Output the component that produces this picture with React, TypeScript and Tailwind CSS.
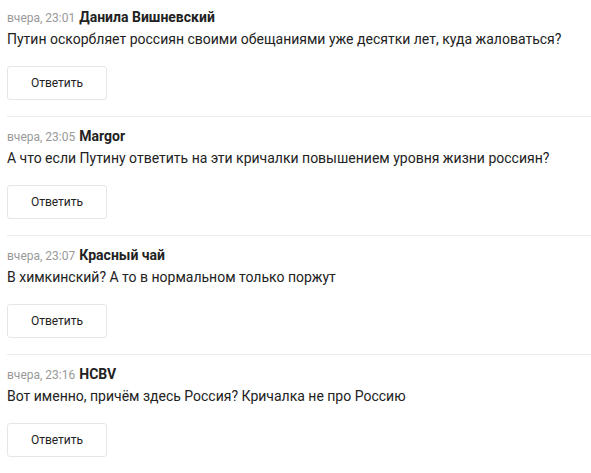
import React from "react";

const comments = [
  { time: "вчера, 23:01", author: "Данила Вишневский", text: "Путин оскорбляет россиян своими обещаниями уже десятки лет, куда жаловаться?" },
  { time: "вчера, 23:05", author: "Margor", text: "А что если Путину ответить на эти кричалки повышением уровня жизни россиян?" },
  { time: "вчера, 23:07", author: "Красный чай", text: "В химкинский? А то в нормальном только поржут" },
  { time: "вчера, 23:16", author: "HCBV", text: "Вот именно, причём здесь Россия? Кричалка не про Россию" },
];

export default function App() {
  return (
    <div className="w-[591px] h-[473px] bg-white pl-[7px] overflow-hidden" style={{ fontFamily: "Roboto, 'Liberation Sans', sans-serif" }}>
      {comments.map((c, i) => (
        <div key={i} className={i === 0 ? "pt-[9px]" : "border-t border-[#ecebe7] pt-[11px]"}>
          <div className="h-[16px] leading-[16px] flex items-baseline gap-[4px]">
            <span className="text-[12px] text-[#999999]">{c.time}</span>
            <span className="text-[14px] font-bold text-[#222222]">{c.author}</span>
          </div>
          <div className="h-[20px] leading-[20px] mt-[4px] text-[14px] text-[#222222]">{c.text}</div>
          <button className="mt-[17px] mb-[16px] w-[100px] h-[34px] border border-[#e6e6e6] rounded-[3px] bg-white text-[12px] text-[#222222] flex items-center justify-center">
            Ответить
          </button>
        </div>
      ))}
    </div>
  );
}
